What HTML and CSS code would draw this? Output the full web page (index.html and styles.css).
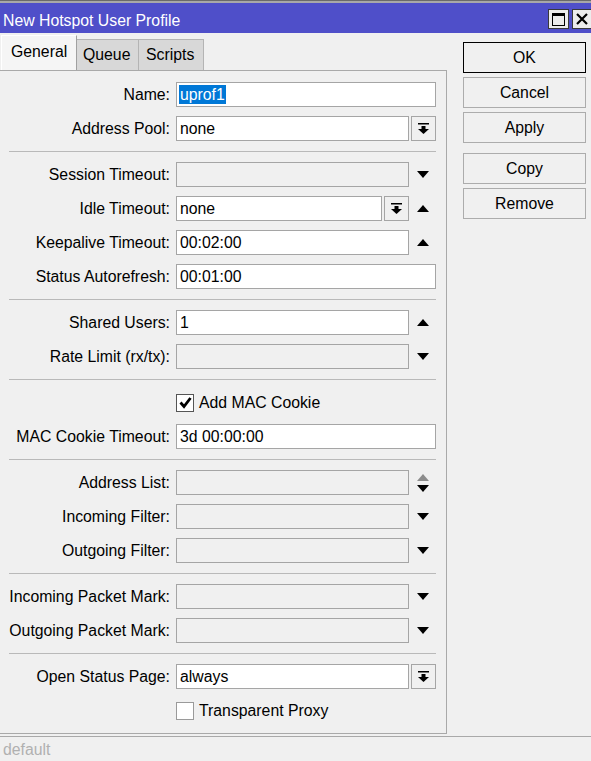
FILE: index.html
```html
<!DOCTYPE html>
<html>
<head>
<meta charset="utf-8">
<link rel="stylesheet" href="styles.css">
</head>
<body>
<div class="topstrip"></div>
<div class="titlebar">
  <span class="title">New Hotspot User Profile</span>
  <div class="winbtns">
    <div class="winbtn"><svg width="13" height="13" viewBox="0 0 13 13"><rect x="0.5" y="0.5" width="12" height="12" fill="none" stroke="#000" stroke-width="1"/><rect x="0" y="0" width="13" height="3" fill="#000"/></svg></div>
    <div class="winbtn"><svg width="12" height="12" viewBox="0 0 12 12"><path d="M1 1 L11 11 M11 1 L1 11" stroke="#000" stroke-width="2.2"/></svg></div>
  </div>
</div>
<div class="main">
  <div class="left">
    <div class="tabs">
      <div class="tab active">General</div>
      <div class="tab">Queue</div>
      <div class="tab">Scripts</div>
    </div>
    <div class="panel">
      <div class="row"><div class="label">Name:</div><div class="field"><div class="box"><span class="sel">uprof1</span></div></div></div>
      <div class="row"><div class="label">Address Pool:</div><div class="field"><div class="box">none</div><div class="ddbtn"><svg width="11" height="12" viewBox="0 0 11 12"><rect x="0" y="0" width="11" height="1.5" fill="#000"/><rect x="3.5" y="3" width="4" height="3" fill="#000"/><polygon points="0,6 11,6 5.5,11" fill="#000"/></svg></div></div></div>
      <div class="sep"></div>
      <div class="row"><div class="label">Session Timeout:</div><div class="field"><div class="box dis"></div><div class="arrow"><span class="tri down"></span></div></div></div>
      <div class="row"><div class="label">Idle Timeout:</div><div class="field"><div class="box">none</div><div class="ddbtn"><svg width="11" height="12" viewBox="0 0 11 12"><rect x="0" y="0" width="11" height="1.5" fill="#000"/><rect x="3.5" y="3" width="4" height="3" fill="#000"/><polygon points="0,6 11,6 5.5,11" fill="#000"/></svg></div><div class="arrow"><span class="tri up"></span></div></div></div>
      <div class="row"><div class="label">Keepalive Timeout:</div><div class="field"><div class="box">00:02:00</div><div class="arrow"><span class="tri up"></span></div></div></div>
      <div class="row"><div class="label">Status Autorefresh:</div><div class="field"><div class="box">00:01:00</div></div></div>
      <div class="sep"></div>
      <div class="row"><div class="label">Shared Users:</div><div class="field"><div class="box">1</div><div class="arrow"><span class="tri up"></span></div></div></div>
      <div class="row"><div class="label">Rate Limit (rx/tx):</div><div class="field"><div class="box dis"></div><div class="arrow"><span class="tri down"></span></div></div></div>
      <div class="sep"></div>
      <div class="row"><div class="label"></div><div class="field"><div class="check"><span class="cb on"><svg width="13" height="13" viewBox="0 0 13 13"><path d="M1.5 6.5 L5 10.5 L11.5 2" fill="none" stroke="#000" stroke-width="2.8"/></svg></span>Add MAC Cookie</div></div></div>
      <div class="row"><div class="label">MAC Cookie Timeout:</div><div class="field"><div class="box">3d 00:00:00</div></div></div>
      <div class="sep"></div>
      <div class="row"><div class="label">Address List:</div><div class="field"><div class="box dis"></div><div class="arrow stack"><span class="tri up gray"></span><span class="tri down"></span></div></div></div>
      <div class="row"><div class="label">Incoming Filter:</div><div class="field"><div class="box dis"></div><div class="arrow"><span class="tri down"></span></div></div></div>
      <div class="row"><div class="label">Outgoing Filter:</div><div class="field"><div class="box dis"></div><div class="arrow"><span class="tri down"></span></div></div></div>
      <div class="sep"></div>
      <div class="row"><div class="label">Incoming Packet Mark:</div><div class="field"><div class="box dis"></div><div class="arrow"><span class="tri down"></span></div></div></div>
      <div class="row"><div class="label">Outgoing Packet Mark:</div><div class="field"><div class="box dis"></div><div class="arrow"><span class="tri down"></span></div></div></div>
      <div class="sep"></div>
      <div class="row"><div class="label">Open Status Page:</div><div class="field"><div class="box">always</div><div class="ddbtn"><svg width="11" height="12" viewBox="0 0 11 12"><rect x="0" y="0" width="11" height="1.5" fill="#000"/><rect x="3.5" y="3" width="4" height="3" fill="#000"/><polygon points="0,6 11,6 5.5,11" fill="#000"/></svg></div></div></div>
      <div class="row"><div class="label"></div><div class="field"><div class="check"><span class="cb"></span>Transparent Proxy</div></div></div>
    </div>
  </div>
  <div class="buttons">
    <div class="btn focus">OK</div>
    <div class="btn">Cancel</div>
    <div class="btn">Apply</div>
    <div class="btn spaced">Copy</div>
    <div class="btn">Remove</div>
  </div>
</div>
<div class="status">default</div>
</body>
</html>
```
FILE: styles.css
```css
* { box-sizing: border-box; }
html, body { margin: 0; padding: 0; }
body {
  width: 591px;
  height: 761px;
  overflow: hidden;
  background: #f0f0f0;
  font-family: "Liberation Sans", Arial, sans-serif;
  font-size: 15.8px;
  color: #000;
}
.topstrip {
  height: 3px;
  background: #a8a8a8;
  border-top: 1px solid #6a6a6a;
}
.titlebar {
  height: 30px;
  background: #4f4fc9;
  display: flex;
  justify-content: space-between;
  padding-left: 3px;
}
.title { color: #fff; padding-top: 9px; line-height: 18px; }
.winbtns { display: flex; gap: 3px; margin-top: 6px; }
.winbtn {
  width: 21px;
  height: 20px;
  background: #ececec;
  border: 1px solid #3a3a3a;
  display: flex;
  align-items: center;
  justify-content: center;
}
.winbtn:last-child { width: 19px; border-right: none; }
.main { display: flex; }
.left { width: 447px; }
.tabs {
  height: 37px;
  display: flex;
  align-items: flex-end;
  padding-left: 1px;
}
.tab {
  height: 31px;
  padding: 0 7px 0 6px;
  background: #d8d8d8;
  border: 1px solid #b4b4b4;
  border-bottom: none;
  border-left: none;
  display: flex;
  align-items: center;
}
.tab.active {
  height: 35px;
  width: 76px;
  padding-left: 9px;
  background: #f5f5f5;
  border-left: 1px solid #ffffff;
  border-top: 1px solid #ffffff;
  border-right: 1px solid #a0a0a0;
  padding-bottom: 2px;
}
.tab:nth-child(2) { width: 62px; }
.tab:nth-child(3) { width: 65px; padding-left: 7px; }
.panel {
  height: 664px;
  border: 1px solid #a9a9a9;
  border-left: none;
  padding-top: 6px;
}
.row {
  height: 34px;
  display: flex;
  align-items: center;
  padding-top: 1px;
}
.label {
  width: 170px;
  text-align: right;
  margin-right: 6px;
  white-space: nowrap;
}
.field {
  width: 260px;
  height: 25px;
  display: flex;
}
.box {
  flex: 1;
  height: 25px;
  background: #fff;
  border: 1px solid #a5a5a5;
  padding-left: 3px;
  line-height: 23px;
  white-space: nowrap;
  overflow: hidden;
}
.box.dis { background: #f0f0f0; }
.sel {
  background: #0078d7;
  color: #fff;
  padding: 0 1px;
  margin-left: -1px;
  display: inline-block;
  line-height: 19px;
}
.ddbtn {
  width: 25px;
  height: 25px;
  margin-left: 2px;
  border: 1px solid #a5a5a5;
  background: #f0f0f0;
  display: flex;
  align-items: center;
  justify-content: center;
  flex: none;
}
.ddbtn svg { margin-top: 1px; }
.arrow {
  width: 27px;
  flex: none;
  display: flex;
  align-items: center;
  justify-content: center;
  padding-left: 1px;
}
.arrow.stack { flex-direction: column; gap: 4px; }
.tri {
  width: 0;
  height: 0;
  border-left: 6.5px solid transparent;
  border-right: 6.5px solid transparent;
}
.tri.down { border-top: 7px solid #000; }
.tri.up { border-bottom: 7px solid #000; }
.tri.up.gray { border-bottom-color: #8c8c8c; }
.check {
  display: flex;
  align-items: center;
  height: 25px;
  white-space: nowrap;
}
.cb {
  width: 18px;
  height: 18px;
  background: #fff;
  border: 1px solid #9a9a9a;
  margin-right: 5px;
  display: flex;
  align-items: center;
  justify-content: center;
}
.cb.on { border-color: #555; }
.sep {
  height: 12px;
  margin-left: 9px;
  width: 427px;
  padding-top: 6px;
}
.sep::before {
  content: "";
  display: block;
  height: 1px;
  background: #b9b9b9;
}
.buttons {
  padding-top: 9px;
  margin-left: 16px;
  display: flex;
  flex-direction: column;
  gap: 4px;
}
.btn {
  width: 123px;
  height: 31px;
  border: 1px solid #acacac;
  background: #f0f0f0;
  display: flex;
  align-items: center;
  justify-content: center;
}
.btn.focus { border-color: #000; }
.btn.spaced { margin-top: 6px; }
.status {
  margin-top: 2px;
  border-top: 1px solid #a9a9a9;
  height: 25px;
  color: #b0b0b0;
  padding-left: 3px;
  line-height: 26px;
}
```
